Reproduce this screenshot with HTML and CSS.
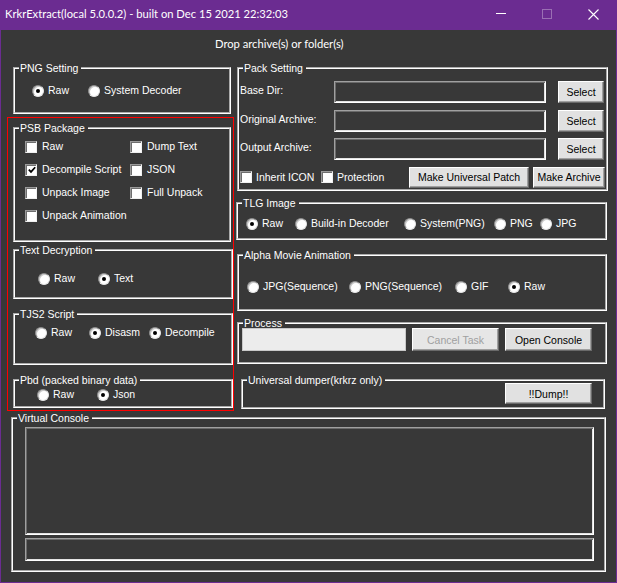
FILE: index.html
```html
<!DOCTYPE html>
<html lang="en">
<head>
<meta charset="utf-8">
<title>KrkrExtract</title>
<link rel="stylesheet" href="styles.css">
</head>
<body>
<div class="window">
  <header class="titlebar">
    <span class="title">KrkrExtract(local 5.0.0.2) - built on Dec 15 2021 22:32:03</span>
    <div class="caption-btns">
      <span class="cap"><svg width="10" height="10" viewBox="0 0 10 10"><path d="M0 4.5H10" stroke="#fff" stroke-width="1"/></svg></span>
      <span class="cap"><svg width="10" height="10" viewBox="0 0 10 10"><rect x="0.5" y="0.5" width="9" height="9" fill="none" stroke="#9a6fb3" stroke-width="1"/></svg></span>
      <span class="cap"><svg width="11" height="11" viewBox="0 0 11 11"><path d="M0.5 0.5L10.5 10.5M10.5 0.5L0.5 10.5" stroke="#fff" stroke-width="1.1"/></svg></span>
    </div>
  </header>
  <div class="client">
    <div class="drop">Drop archive(s) or folder(s)</div>
    <div class="main">
      <div class="col-left">
        <fieldset class="grp g-png">
          <legend>PNG Setting</legend>
          <div class="opts o-png">
            <span class="opt"><span class="radio on"></span>Raw</span>
            <span class="opt"><span class="radio"></span>System Decoder</span>
          </div>
        </fieldset>
        <div class="redbox">
          <fieldset class="grp g-psb">
            <legend>PSB Package</legend>
            <div class="checks">
              <span class="opt chk"><span class="cb"></span>Raw</span>
              <span class="opt chk"><span class="cb"></span>Dump Text</span>
              <span class="opt chk"><span class="cb"><svg width="8" height="8" viewBox="0 0 8 8"><path d="M0.8 3.6L3 5.9L7.2 1.2" fill="none" stroke="#000" stroke-width="1.7"/></svg></span>Decompile Script</span>
              <span class="opt chk"><span class="cb"></span>JSON</span>
              <span class="opt chk"><span class="cb"></span>Unpack Image</span>
              <span class="opt chk"><span class="cb"></span>Full Unpack</span>
              <span class="opt chk"><span class="cb"></span>Unpack Animation</span>
            </div>
          </fieldset>
          <fieldset class="grp g-td">
            <legend>Text Decryption</legend>
            <div class="opts o-td">
              <span class="opt"><span class="radio"></span>Raw</span>
              <span class="opt"><span class="radio on"></span>Text</span>
            </div>
          </fieldset>
          <fieldset class="grp g-tjs">
            <legend>TJS2 Script</legend>
            <div class="opts o-tjs">
              <span class="opt"><span class="radio"></span>Raw</span>
              <span class="opt"><span class="radio on"></span>Disasm</span>
              <span class="opt"><span class="radio on"></span>Decompile</span>
            </div>
          </fieldset>
          <fieldset class="grp g-pbd">
            <legend>Pbd (packed binary data)</legend>
            <div class="opts o-pbd">
              <span class="opt"><span class="radio"></span>Raw</span>
              <span class="opt"><span class="radio on"></span>Json</span>
            </div>
          </fieldset>
        </div>
      </div>
      <div class="col-right">
        <fieldset class="grp g-pack">
          <legend>Pack Setting</legend>
          <div class="pack-rows">
            <div class="field-row">
              <span class="field-label">Base Dir:</span>
              <span class="sunken field"></span>
              <span class="btn btn-select">Select</span>
            </div>
            <div class="field-row">
              <span class="field-label">Original Archive:</span>
              <span class="sunken field"></span>
              <span class="btn btn-select">Select</span>
            </div>
            <div class="field-row">
              <span class="field-label">Output Archive:</span>
              <span class="sunken field"></span>
              <span class="btn btn-select">Select</span>
            </div>
            <div class="action-row">
              <span class="opt chk chk-inherit"><span class="cb"></span>Inherit ICON</span>
              <span class="opt chk chk-prot"><span class="cb"></span>Protection</span>
              <span class="btn btn-patch">Make Universal Patch</span>
              <span class="btn btn-archive">Make Archive</span>
            </div>
          </div>
        </fieldset>
        <fieldset class="grp g-tlg">
          <legend>TLG Image</legend>
          <div class="opts o-tlg">
            <span class="opt"><span class="radio on"></span>Raw</span>
            <span class="opt"><span class="radio"></span>Build-in Decoder</span>
            <span class="opt"><span class="radio"></span>System(PNG)</span>
            <span class="opt"><span class="radio"></span>PNG</span>
            <span class="opt"><span class="radio"></span>JPG</span>
          </div>
        </fieldset>
        <fieldset class="grp g-alpha">
          <legend>Alpha Movie Animation</legend>
          <div class="opts o-alpha">
            <span class="opt"><span class="radio"></span>JPG(Sequence)</span>
            <span class="opt"><span class="radio"></span>PNG(Sequence)</span>
            <span class="opt"><span class="radio"></span>GIF</span>
            <span class="opt"><span class="radio on"></span>Raw</span>
          </div>
        </fieldset>
        <fieldset class="grp g-proc">
          <legend>Process</legend>
          <div class="proc-row">
            <span class="progress"></span>
            <span class="btn btn-proc disabled">Cancel Task</span>
            <span class="btn btn-proc">Open Console</span>
          </div>
        </fieldset>
        <fieldset class="grp g-uni">
          <legend>Universal dumper(krkrz only)</legend>
          <div class="uni-row">
            <span class="btn btn-dump">!!Dump!!</span>
          </div>
        </fieldset>
      </div>
    </div>
    <fieldset class="grp g-con">
      <legend>Virtual Console</legend>
      <div class="con-body">
        <div class="sunken con-out"></div>
        <div class="sunken con-in"></div>
      </div>
    </fieldset>
  </div>
</div>
</body>
</html>
```
FILE: styles.css
```css
* { box-sizing: border-box; }
html, body { margin: 0; padding: 0; }
body {
  width: 617px;
  height: 583px;
  overflow: hidden;
  background: #383838;
  color: #fff;
  font-family: "Liberation Sans", Arial, sans-serif;
  font-size: 10.5px;
}
.window {
  width: 617px;
  height: 583px;
  background: #6b2c91;
  padding: 0 1px 1px 1px;
  display: flex;
  flex-direction: column;
}
.titlebar {
  height: 30px;
  flex: none;
  display: flex;
  align-items: center;
  justify-content: space-between;
}
.title {
  font-family: Lato, "Liberation Sans", sans-serif;
  font-size: 11.2px;
  padding: 0 0 3px 4px;
  white-space: nowrap;
}
.caption-btns { display: flex; height: 30px; }
.cap {
  width: 46px;
  height: 30px;
  display: flex;
  align-items: center;
  justify-content: center;
  padding-bottom: 2px;
}
.cap svg { display: block; }
.client {
  flex: 1;
  background: #383838;
  display: flex;
  flex-direction: column;
}
.drop {
  height: 32px;
  flex: none;
  padding: 8px 0 0 214px;
  line-height: 12px;
  font-family: Lato, "Liberation Sans", sans-serif;
  font-size: 11.2px;
}
.main {
  display: flex;
  align-items: flex-start;
  gap: 2px;
  padding-left: 6px;
}
.col-left {
  width: 227px;
  display: flex;
  flex-direction: column;
  gap: 3px;
}
.col-right {
  width: 372px;
  display: flex;
  flex-direction: column;
}

/* group boxes */
.grp {
  margin: 0;
  padding: 0;
  border: 2px groove #fff;
  min-width: 0;
}
.grp > legend {
  padding: 0 3px 0 1px;
  margin-left: 4px;
  line-height: 12px;
  font-size: 10.5px;
  color: #fff;
  white-space: nowrap;
}
.g-png { width: 218px; height: 52px; margin-left: 6px; }
.redbox {
  flex: none;
  width: 227px;
  height: 294px;
  border: 1px solid #ff0000;
  padding: 4px 0 2px 5px;
  display: flex;
  flex-direction: column;
}
.g-psb { width: 218px; height: 120px; margin-bottom: 2px; }
.g-td { width: 220px; height: 55px; margin-bottom: 9px; }
.g-tjs { width: 220px; height: 57px; margin-bottom: 9px; }
.g-pbd { width: 220px; height: 34px; }

.g-pack { width: 371px; height: 129px; margin-left: 1px; margin-bottom: 6px; }
.g-tlg { width: 371px; height: 43px; margin-bottom: 9px; }
.g-alpha { width: 370px; height: 62px; margin-left: 1px; margin-bottom: 6px; }
.g-proc { width: 370px; height: 47px; margin-left: 1px; margin-bottom: 10px; }
.g-uni { width: 364px; height: 35px; margin-left: 5px; }
.g-con { width: 595px; height: 160px; margin: 1px 0 0 10px; }

/* options */
.opts { display: grid; line-height: 13px; }
.opt {
  display: flex;
  align-items: center;
  gap: 4px;
  white-space: nowrap;
  line-height: 13px;
}
.radio {
  flex: none;
  position: relative;
  width: 12px;
  height: 12px;
  border-radius: 50%;
  background: #fff;
  border: 1px solid;
  border-color: #8a8a8a #e6e6e6 #e6e6e6 #8a8a8a;
  box-shadow: inset 1px 1px 0 #c8c8c8;
}
.radio.on::after {
  content: "";
  position: absolute;
  left: 3px;
  top: 3px;
  width: 4px;
  height: 4px;
  border-radius: 50%;
  background: #000;
}
.o-png { padding: 10px 0 0 17px; grid-template-columns: 56px auto; }
.o-td { padding: 16px 0 0 23px; grid-template-columns: 60px auto; }
.o-tjs { padding: 6px 0 0 20px; grid-template-columns: 54px 60px auto; }
.o-pbd { padding: 2px 0 0 22px; grid-template-columns: 60px auto; }
.o-tlg { padding: 8px 0 0 8px; grid-template-columns: 49px 109px 90px 46px auto; }
.o-alpha { padding: 19px 0 0 8px; grid-template-columns: 102px 106px 53px auto; }

/* checkboxes */
.checks {
  display: grid;
  grid-template-columns: 105px auto;
  grid-auto-rows: 23px;
  align-items: center;
  padding: 1px 0 0 10px;
}
.chk { gap: 5px; }
.cb {
  flex: none;
  width: 12px;
  height: 12px;
  background: #fff;
  border: 1px solid;
  border-color: #9a9a9a #f0f0f0 #f0f0f0 #9a9a9a;
  box-shadow: inset 1px 1px 0 #6e6e6e;
  display: flex;
  align-items: center;
  justify-content: center;
  padding: 1px 0 0 1px;
}
.cb svg { display: block; }

/* pack setting */
.pack-rows {
  padding: 7px 0 0 1px;
  display: flex;
  flex-direction: column;
  gap: 6.5px;
}
.field-row { display: flex; align-items: flex-start; height: 22px; }
.field-label { width: 94px; padding-top: 3px; line-height: 13px; }
.sunken {
  display: block;
  background: #383838;
  border: 1px solid;
  border-color: #a0a0a0 #fff #fff #a0a0a0;
  box-shadow: inset 1px 1px 0 #6a6a6a, inset -1px -1px 0 #e3e3e3;
}
.field { width: 212px; height: 22px; }
.btn {
  display: flex;
  align-items: center;
  justify-content: center;
  background: #e1e1e1;
  color: #000;
  border: 1px solid;
  border-color: #fff #6a6a6a #6a6a6a #fff;
  box-shadow: inset -1px -1px 0 #a0a0a0;
  white-space: nowrap;
}
.btn.disabled { color: #a0a0a0; background: #e6e6e6; }
.btn-select { width: 46px; height: 22px; margin-left: 12px; }
.action-row { display: flex; align-items: center; height: 21px; }
.chk-inherit { width: 81px; gap: 4px; }
.chk-prot { width: 88px; gap: 4px; }
.btn-patch { width: 120px; height: 21px; }
.btn-archive { width: 72px; height: 21px; margin-left: 4px; }

/* process */
.proc-row { display: flex; padding-left: 3px; margin-top: -1px; }
.progress {
  display: block;
  width: 164px;
  height: 23px;
  margin-right: 6px;
  background: #ececec;
  border: 1px solid #c8c8c8;
}
.btn-proc { width: 87px; height: 23px; margin-right: 6px; }
.uni-row { display: flex; justify-content: flex-end; padding-right: 11px; margin-top: -3px; }
.btn-dump { width: 87px; height: 21px; }

/* console */
.con-body {
  padding: 3px 0 0 12px;
  display: flex;
  flex-direction: column;
  gap: 3px;
}
.con-out { width: 569px; height: 108px; }
.con-in { width: 569px; height: 23px; }
```
